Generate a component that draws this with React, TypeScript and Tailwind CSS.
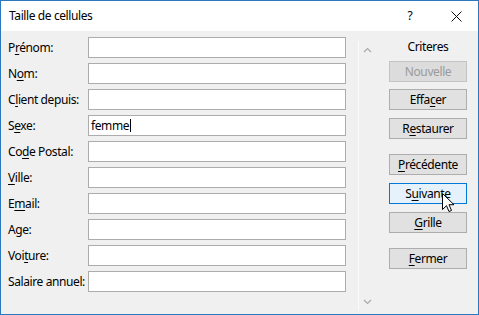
import React from "react";

function AK({ text, k }: { text: string; k?: number }) {
  if (k === undefined || k < 0) return <>{text}</>;
  return (
    <>
      {text.slice(0, k)}
      <span className="underline underline-offset-[2px] decoration-[1px]">{text[k]}</span>
      {text.slice(k + 1)}
    </>
  );
}

const fields: { label: string; k?: number; value?: string }[] = [
  { label: "Prénom:", k: 1 },
  { label: "Nom:", k: 1 },
  { label: "Client depuis:", k: 1 },
  { label: "Sexe:", k: 1, value: "femme" },
  { label: "Code Postal:", k: 2 },
  { label: "Ville:", k: 0 },
  { label: "Email:", k: 1 },
  { label: "Age:" },
  { label: "Voiture:", k: 3 },
  { label: "Salaire annuel:" },
];

function Btn({
  text,
  k,
  mt,
  disabled,
  hover,
}: {
  text: string;
  k?: number;
  mt: string;
  disabled?: boolean;
  hover?: boolean;
}) {
  const cls = disabled
    ? "bg-[#dcdcdc] border-[#c4c4c4] text-[#9a9a9a]"
    : hover
    ? "bg-[#e5f1fb] border-[#0078d7] text-black"
    : "bg-[#e1e1e1] border-[#adadad] text-black";
  return (
    <div className={`${mt} w-[78px] h-[21px] border ${cls} flex items-center justify-center leading-[16px]`}>
      <AK text={text} k={k} />
    </div>
  );
}

export default function App() {
  return (
    <div className="relative w-[479px] h-[315px] border border-[#2a78c0] flex flex-col font-['Noto_Sans',sans-serif] text-[12px] tracking-[-0.4px] text-black overflow-hidden">
      <div className="h-[30px] bg-white flex items-center pl-[8px] shrink-0">
        <span className="leading-[16px]">Taille de cellules</span>
        <div className="flex-1" />
        <span className="leading-[16px] w-[10px] text-center">?</span>
        <svg className="ml-[36px] mr-[16px]" width="11" height="11" viewBox="0 0 11 11">
          <path d="M0.5 0.5 L10.5 10.5 M10.5 0.5 L0.5 10.5" stroke="#111" strokeWidth="1" />
        </svg>
      </div>
      <div className="flex-1 bg-[#f0f0f0] flex">
        <div className="pl-[7px] pt-[6px] flex flex-col gap-[5px]">
          {fields.map((f) => (
            <div key={f.label} className="flex h-[21px] items-center">
              <div className="w-[80px] leading-[16px] whitespace-nowrap">
                <AK text={f.label} k={f.k} />
              </div>
              <div className="w-[258px] h-[21px] bg-white border border-[#acacac] flex items-center pl-[2px] leading-[16px]">
                {f.value && (
                  <>
                    <span>{f.value}</span>
                    <span className="ml-[1px] w-[1px] h-[13px] bg-black" />
                  </>
                )}
              </div>
            </div>
          ))}
        </div>
        <div className="ml-[12px] mt-[10px] mb-[4px] w-[17px] border-l border-[#fbfbfb] flex flex-col justify-between items-center">
          <div className="h-[17px] flex items-center justify-center">
            <svg width="9" height="6" viewBox="0 0 9 6">
              <path d="M1 5 L4.5 1.5 L8 5" stroke="#a8a8a8" strokeWidth="1.2" fill="none" />
            </svg>
          </div>
          <div className="h-[17px] flex items-center justify-center">
            <svg width="9" height="6" viewBox="0 0 9 6">
              <path d="M1 1 L4.5 4.5 L8 1" stroke="#a8a8a8" strokeWidth="1.2" fill="none" />
            </svg>
          </div>
        </div>
        <div className="pl-[14px] pt-[8px] flex flex-col">
          <div className="w-[78px] text-center leading-[16px]">Criteres</div>
          <Btn text="Nouvelle" mt="mt-[6px]" disabled />
          <Btn text="Effacer" k={4} mt="mt-[7px]" />
          <Btn text="Restaurer" k={1} mt="mt-[8px]" />
          <Btn text="Précédente" k={0} mt="mt-[15px]" />
          <Btn text="Suivante" k={1} mt="mt-[8px]" hover />
          <Btn text="Grille" k={0} mt="mt-[8px]" />
          <Btn text="Fermer" k={0} mt="mt-[15px]" />
        </div>
      </div>
      <svg className="absolute left-[441px] top-[192px]" width="13" height="20" viewBox="0 0 13 20">
        <path
          d="M0.5 0.5 L0.5 16.5 L4.5 12.7 L7 18.5 L9.5 17.5 L7 11.7 L12 11.7 Z"
          fill="#fff"
          stroke="#000"
          strokeWidth="1"
          strokeLinejoin="miter"
        />
      </svg>
    </div>
  );
}
